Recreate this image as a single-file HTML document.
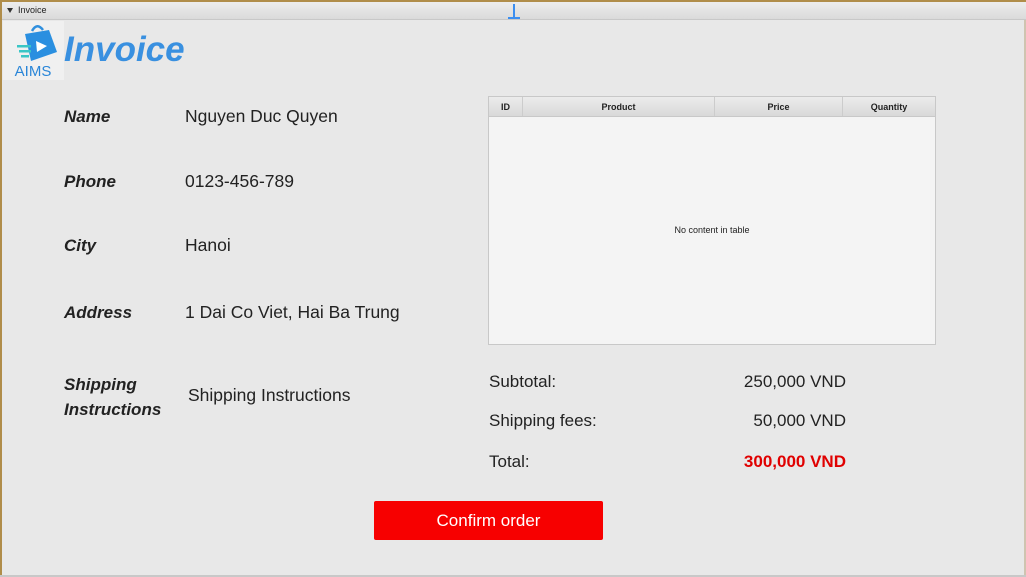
<!DOCTYPE html>
<html><head><meta charset="utf-8"><style>
*{margin:0;padding:0;box-sizing:border-box}
body{width:1026px;height:577px;overflow:hidden;background:#e8e8e8;font-family:"Liberation Sans",sans-serif;position:relative}
.tb{position:absolute;left:0;top:0;width:1026px;height:20px;background:linear-gradient(#efefef,#dadada);border-bottom:1px solid #c8c8c8;font-size:9px;color:#222}
.tb span{position:absolute;left:18px;top:5px}
.tb i{position:absolute;left:7px;top:8px;width:0;height:0;border-left:3px solid transparent;border-right:3px solid transparent;border-top:5px solid #333}
.abs{position:absolute}
.lbl{font-weight:bold;font-style:italic;font-size:17px;color:#222}
.val{font-size:17.5px;color:#222}
</style></head><body>
<div class="tb"><i></i><span>Invoice</span>
<div class="abs" style="left:513px;top:4px;width:2px;height:14px;background:#3b8ef0"></div>
<div class="abs" style="left:508px;top:17px;width:12px;height:2px;background:#3b8ef0"></div>
</div>
<div class="abs" style="left:0;top:0;width:1026px;height:2px;background:#b08d4a"></div>
<div class="abs" style="left:0;top:0;width:2px;height:577px;background:#b08d4a"></div>
<div class="abs" style="right:0;top:20px;width:2px;height:557px;background:#cfc4b0"></div>
<div class="abs" style="left:0;bottom:0;width:1026px;height:2px;background:#c8c8c8"></div>
<div class="abs" style="left:3px;top:21px;width:61px;height:59px;background:#f0f0f0">
<svg width="61" height="59" viewBox="0 0 61 59">
<path d="M29 10 q5 -9 11 -1" stroke="#2f8fde" stroke-width="2.5" fill="none"/>
<path d="M22 13 L46 9 L54 31 L28 40 Z" fill="#2a8fe0"/>
<path d="M33 20 L44 25 L34 31 Z" fill="#fff"/>
<rect x="14" y="24" width="14" height="2.5" fill="#3ac6c6"/>
<rect x="16" y="29" width="12" height="2.5" fill="#3ac6c6"/>
<rect x="18" y="34" width="8" height="2.5" fill="#3ac6c6"/>
<text x="30" y="55" text-anchor="middle" font-family="Liberation Sans" font-size="15" fill="#2a86d8">AIMS</text>
</svg></div>
<div class="abs" style="left:64px;top:30px;font-size:35px;font-weight:bold;font-style:italic;color:#3990e0">Invoice</div>
<div class="abs lbl" style="left:64px;top:107px">Name</div>
<div class="abs val" style="left:185px;top:106px">Nguyen Duc Quyen</div>
<div class="abs lbl" style="left:64px;top:172px">Phone</div>
<div class="abs val" style="left:185px;top:171px">0123-456-789</div>
<div class="abs lbl" style="left:64px;top:236px">City</div>
<div class="abs val" style="left:185px;top:235px">Hanoi</div>
<div class="abs lbl" style="left:64px;top:303px">Address</div>
<div class="abs val" style="left:185px;top:302px">1 Dai Co Viet, Hai Ba Trung</div>
<div class="abs lbl" style="left:64px;top:372px;line-height:25px">Shipping<br>Instructions</div>
<div class="abs val" style="left:188px;top:385px">Shipping Instructions</div>
<div class="abs" style="left:488px;top:96px;width:448px;height:249px;border:1px solid #c8c8c8;background:#f4f4f4">
<div style="display:flex;height:20px;background:linear-gradient(#ececec,#d9d9d9);border-bottom:1px solid #c8c8c8;font-size:9px;font-weight:bold;color:#222;line-height:20px;text-align:center">
<div style="width:34px;border-right:1px solid #ccc">ID</div>
<div style="width:192px;border-right:1px solid #ccc">Product</div>
<div style="width:128px;border-right:1px solid #ccc">Price</div>
<div style="flex:1">Quantity</div></div>
<div style="position:absolute;top:128px;width:100%;text-align:center;font-size:9px;color:#222">No content in table</div>
</div>
<div class="abs val" style="left:489px;top:372px;font-size:17px">Subtotal:</div>
<div class="abs val" style="right:180px;top:372px;font-size:17px">250,000 VND</div>
<div class="abs val" style="left:489px;top:411px;font-size:17px">Shipping fees:</div>
<div class="abs val" style="right:180px;top:411px;font-size:17px">50,000 VND</div>
<div class="abs val" style="left:489px;top:452px;font-size:17px">Total:</div>
<div class="abs" style="right:180px;top:452px;font-size:17px;font-weight:bold;color:#e00000">300,000 VND</div>
<div class="abs" style="left:374px;top:501px;width:229px;height:39px;background:#f70000;border-radius:2px;color:#fff;font-size:17px;text-align:center;line-height:39px">Confirm order</div>
</body></html>
